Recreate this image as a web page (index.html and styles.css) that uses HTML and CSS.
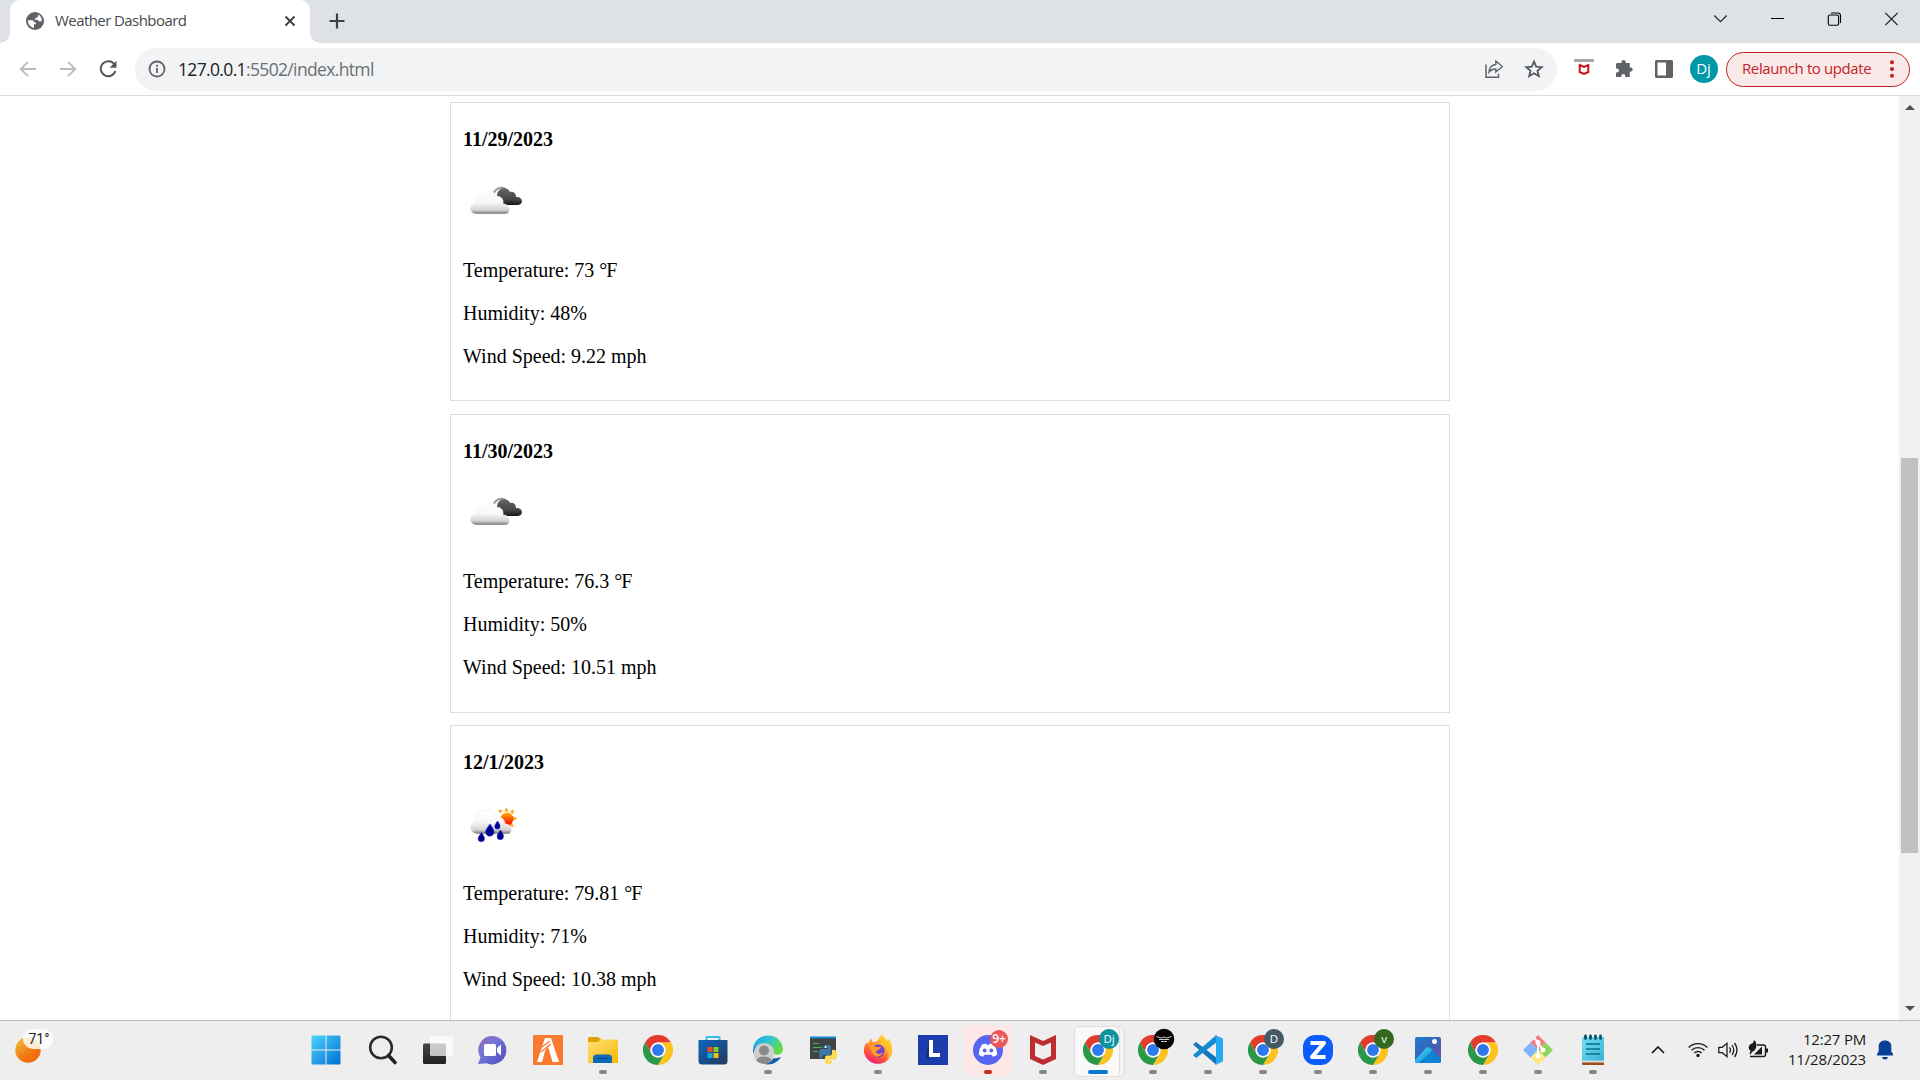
FILE: index.html
```html
<!DOCTYPE html>
<html lang="en">
<head>
<meta charset="utf-8">
<title>Weather Dashboard</title>
<link rel="stylesheet" href="styles.css">
</head>
<body>
<svg class="sprites" width="0" height="0">
  <defs>
    <linearGradient id="gCloud" x1="0" y1="0" x2="0" y2="1"><stop offset="0" stop-color="#fff"/><stop offset=".5" stop-color="#f8f8f8"/><stop offset=".83" stop-color="#d2d2d2"/><stop offset="1" stop-color="#707070"/></linearGradient>
    <linearGradient id="gDark" x1="0" y1="0" x2="0" y2="1"><stop offset="0" stop-color="#666"/><stop offset=".65" stop-color="#474747"/><stop offset="1" stop-color="#151515"/></linearGradient>
    <linearGradient id="gSun" x1="0" y1="0" x2="0" y2="1"><stop offset="0" stop-color="#ffb300"/><stop offset=".5" stop-color="#f50"/><stop offset="1" stop-color="#f00"/></linearGradient>
    <linearGradient id="gWin" x1="0" y1="0" x2="1" y2="1"><stop offset="0" stop-color="#4ed2ff"/><stop offset="1" stop-color="#006fd1"/></linearGradient>
    <linearGradient id="gOrange" x1="0" y1="0" x2=".7" y2="1"><stop offset="0" stop-color="#f0c23a"/><stop offset=".75" stop-color="#f1720f"/><stop offset="1" stop-color="#ef6a10"/></linearGradient>
    <linearGradient id="gChat" x1="0" y1="0" x2="1" y2="1"><stop offset="0" stop-color="#9a63a8"/><stop offset=".4" stop-color="#7079d8"/><stop offset="1" stop-color="#5045bd"/></linearGradient>
    <linearGradient id="gFolder" x1="0" y1="0" x2="1" y2="1"><stop offset="0" stop-color="#ffe07a"/><stop offset="1" stop-color="#f7b900"/></linearGradient>
    <linearGradient id="gStore" x1="0" y1="0" x2="1" y2="1"><stop offset="0" stop-color="#0b68bd"/><stop offset="1" stop-color="#24365c"/></linearGradient>
    <linearGradient id="gEdge" x1="0" y1="0" x2="1" y2=".5"><stop offset="0" stop-color="#1a9fe0"/><stop offset=".5" stop-color="#2fc3d8"/><stop offset="1" stop-color="#64dc48"/></linearGradient>
    <linearGradient id="gFox" x1=".8" y1="0" x2=".3" y2="1"><stop offset="0" stop-color="#ffe63d"/><stop offset=".45" stop-color="#ff9428"/><stop offset=".8" stop-color="#ff4048"/><stop offset="1" stop-color="#e8208a"/></linearGradient>
    <linearGradient id="gPhoto" x1="0" y1="0" x2="1" y2="1"><stop offset="0" stop-color="#1c7fd4"/><stop offset=".5" stop-color="#3763b5"/><stop offset="1" stop-color="#8848ad"/></linearGradient>
    <linearGradient id="gHill" x1="0" y1="0" x2="1" y2="1"><stop offset="0" stop-color="#4fe0fb"/><stop offset="1" stop-color="#0a7fd0"/></linearGradient>
    <linearGradient id="gNote" x1="0" y1="0" x2="1" y2="1"><stop offset="0" stop-color="#76dff0"/><stop offset="1" stop-color="#35b4d8"/></linearGradient>
    <linearGradient id="gView" x1="0" y1="0" x2="0" y2="1"><stop offset="0" stop-color="#454545"/><stop offset="1" stop-color="#222"/></linearGradient>
    <symbol id="chrome" viewBox="0 0 48 48">
      <path fill="#e33b2e" d="M24 12H44.8A24 24 0 0 0 3.2 12L13.6 30A12 12 0 0 1 24 12z"/>
      <path fill="#fcc31e" d="M24 12H44.8A24 24 0 0 1 24 48L34.4 30A12 12 0 0 0 24 12z"/>
      <path fill="#2a9847" d="M34.4 30A12 12 0 0 1 13.6 30L3.2 12A24 24 0 0 0 24 48z"/>
      <circle cx="24" cy="24" r="12" fill="#fff"/><circle cx="24" cy="24" r="9.5" fill="#3079ed"/>
    </symbol>
    <symbol id="clouds" viewBox="0 0 62 62">
      <path fill="none" stroke="#999" stroke-width="2" d="M30 27c1-8 10-11 14-5"/>
      <path fill="url(#gDark)" d="M34 27c0-9 11-10 13-4 4-1 6 2 6 5 7-1 8 8 2 8H43c-6-1-9-4-9-9z"/>
      <path fill="url(#gCloud)" stroke="#ededed" stroke-width=".5" d="M13.500 45c-7.500 0-8.500-10-1-11-1-6 2-8 6-7 2-6 12.500-7 14.500 0 5 0 8 3 7 8 7-1 9 10 2 10z"/>
    </symbol>
    <symbol id="rain" viewBox="0 -1 62 62">
      <path fill="#ffa212" d="m43.500 14 2 4.500h-4zM51 16.500l-1 5-3-3zM54.500 25.500l-4.500 2v-4zM51 34l-5-1 3-3zM35 16.500l5 1-3 3z"/>
      <circle cx="44" cy="26" r="6.500" fill="url(#gSun)"/>
      <path fill="url(#gCloud)" stroke="#e8e8e8" stroke-width=".5" d="M15 41c-9 0-9-11-3-13 0-12 19-16 22-3 6-2 8 3 8 6 7-1 9 10 2 10z"/>
      <path fill="#000090" stroke="#2222bc" stroke-width=".5" d="M27 31c3 4 4 6 4 8a4.200 4.200 0 0 1-8.400 0c0-2 1.500-4 4.400-8zM18.500 39.500c2 3 3 4.500 3 6a3.200 3.200 0 0 1-6.400 0c0-1.500 1.400-3 3.400-6zM37.500 37c2 3 3 4.500 3 6.500a3.200 3.200 0 0 1-6.400 0c0-2 1.400-3.500 3.400-6.500zM34.500 28c2 2.500 2.500 4 2.500 5.500a2.600 2.600 0 0 1-5.200 0c0-1.500 1-3 2.700-5.500z"/>
    </symbol>
  </defs>
</svg>

<header class="tabstrip">
  <div class="tab">
    <svg class="favicon" width="18" height="18" viewBox="0 0 18 18"><circle cx="9" cy="9" r="9" fill="#5f6368"/><path fill="#fff" d="M2 8.200h4.200c1.200 0 1.600.8 1.600 1.800 1.600 0 2.300.8 2.300 2.300H8v3.600A7 7 0 0 1 2 8.200zM9.500 2.100l2.900.8c0 2-.8 2.700-2.600 2.700-.2 1.500-.9 2.200-2.300 2.200h3.600c1.200 0 1.500 1.800 2.900 1.800.6 0 1.300-.3 2-1l-.6-2.900-2.100-2.600z"/></svg>
    <span class="tab-title">Weather Dashboard</span>
    <svg width="12" height="12" viewBox="0 0 12 12"><path d="M1.500 1.500l9 9M10.500 1.500l-9 9" stroke="#3c4043" stroke-width="1.900"/></svg>
  </div>
  <svg class="newtab" width="16" height="16" viewBox="0 0 16 16"><path d="M8 0.500v15M.5 8h15" stroke="#3c4043" stroke-width="2.200"/></svg>
  <div class="wincontrols">
    <svg viewBox="0 0 14 14"><path d="M.8 3.500l6.200 6.200L13.200 3.500" fill="none" stroke="#222" stroke-width="1.100"/></svg>
    <svg viewBox="0 0 14 14"><path d="M.5 6.500h13" stroke="#000" stroke-width="1"/></svg>
    <svg viewBox="0 0 14 14"><rect x=".8" y="3" width="10.300" height="10.300" rx="1.500" fill="none" stroke="#000" stroke-width="1.100"/><path d="M3.500 1h7q2.500 0 2.500 2.500v7.500" fill="none" stroke="#000" stroke-width="1.100"/></svg>
    <svg viewBox="0 0 14 14"><path d="M.8.8l12.400 12.400M13.200.8L.8 13.200" stroke="#111" stroke-width="1.100"/></svg>
  </div>
</header>

<nav class="toolbar">
  <div class="tool"><svg width="18" height="18" viewBox="0 0 18 18"><path d="M17 9H2M9 1.800L1.800 9 9 16.200" fill="none" stroke="#b9bbbd" stroke-width="1.800"/></svg></div>
  <div class="tool"><svg width="18" height="18" viewBox="0 0 18 18"><path d="M1 9h15M9 1.800L16.200 9 9 16.200" fill="none" stroke="#b9bbbd" stroke-width="1.800"/></svg></div>
  <div class="tool"><svg width="18" height="18" viewBox="0 0 18 18"><path d="M15.500 4.500A7.500 7.500 0 1 0 16.400 11" fill="none" stroke="#54585c" stroke-width="2"/><path d="M17.500 .8v7h-7z" fill="#54585c"/></svg></div>
  <div class="omnibox">
    <svg width="18" height="18" viewBox="0 0 18 18"><circle cx="9" cy="9" r="7.500" fill="none" stroke="#5f6368" stroke-width="1.800"/><path d="M9 8v5M9 4.800v1.900" stroke="#5f6368" stroke-width="1.800"/></svg>
    <span class="url"><b>127.0.0.1</b>:5502/index.html</span>
    <svg class="share" width="20" height="18" viewBox="0 0 20 18"><path d="M2 4.500v12.700h12.500v-3.500" fill="none" stroke="#5f6368" stroke-width="1.500"/><path d="M11.800 1l6.500 5.500-6.500 5.500V9c-3 0-5 .8-6.800 3.200.3-4 2.500-7.200 6.800-7.700z" fill="none" stroke="#5f6368" stroke-width="1.400"/></svg>
    <svg width="20" height="20" viewBox="0 0 20 20"><path d="M10 2.600l2.200 5.100 5.500.5-4.200 3.600 1.300 5.400-4.800-2.900-4.800 2.900 1.300-5.400-4.200-3.600 5.500-.5z" fill="none" stroke="#54585c" stroke-width="1.800"/></svg>
  </div>
  <div class="tool mcafee"><svg width="20" height="20" viewBox="0 0 20 20"><rect y="0" width="20" height="3" rx="1" fill="#aaa5a5"/><path d="M5.700 6l4.300 2 4.300-2v7L10 15l-4.300-2z" fill="none" stroke="#c01818" stroke-width="2"/></svg></div>
  <div class="tool"><svg width="20" height="20" viewBox="0 0 20 20"><path fill="#5f6368" d="M3 4h4.500v-.8a2.100 2.100 0 0 1 4.200 0V4h4.100v4.500h.8a2.100 2.100 0 0 1 0 4.200h-.8V18h-4.500v-1a2 2 0 0 0-4 0v1H2v-4.500h1a2 2 0 0 0 0-4H2V5z"/></svg></div>
  <div class="tool"><svg width="18" height="18" viewBox="0 0 18 18"><path fill="#5f6368" fill-rule="evenodd" d="M1 0h16l1 1v16l-1 1H1l-1-1V1zM2.500 2.500v13h8.500v-13z"/></svg></div>
  <div class="tool"><span class="avatar">Dj</span></div>
  <div class="relaunch"><span>Relaunch to update</span><svg width="4" height="18" viewBox="0 0 4 18"><g fill="#c5221f"><circle cx="2" cy="2.200" r="2"/><circle cx="2" cy="9" r="2"/><circle cx="2" cy="15.800" r="2"/></g></svg></div>
</nav>

<div class="viewport">
  <main class="forecast">
    <section class="card">
      <h4>11/29/2023</h4>
      <svg class="wx"><use href="#clouds"/></svg>
      <p>Temperature: 73 <span class="deg">°</span>F</p>
      <p>Humidity: 48%</p>
      <p>Wind Speed: 9.22 mph</p>
    </section>
    <section class="card">
      <h4>11/30/2023</h4>
      <svg class="wx"><use href="#clouds"/></svg>
      <p>Temperature: 76.3 <span class="deg">°</span>F</p>
      <p>Humidity: 50%</p>
      <p>Wind Speed: 10.51 mph</p>
    </section>
    <section class="card">
      <h4>12/1/2023</h4>
      <svg class="wx"><use href="#rain"/></svg>
      <p>Temperature: 79.81 <span class="deg">°</span>F</p>
      <p>Humidity: 71%</p>
      <p>Wind Speed: 10.38 mph</p>
    </section>
  </main>
  <div class="scrollbar">
    <svg width="10" height="5" viewBox="0 0 10 5"><path fill="#505050" d="M0 5l5-5 5 5z"/></svg>
    <div class="thumb"></div>
    <svg class="down" width="10" height="5" viewBox="0 0 10 5"><path fill="#505050" d="M0 0l5 5 5-5z"/></svg>
  </div>
</div>

<footer class="taskbar">
  <div class="weather">
    <svg width="60" height="59" viewBox="0 0 60 59"><circle cx="28" cy="29" r="12.700" fill="url(#gOrange)"/><rect x="23" y="8" width="30" height="20" rx="10" fill="#fff" fill-opacity=".83"/><text x="28.500" y="23.200">71°</text></svg>
  </div>
  <div class="apps">
    <div class="app start"><svg viewBox="0 0 30 30"><path fill="url(#gWin)" d="M2 .5h12.500v14H.5V2q0-1.500 1.500-1.500zM15.500.5H28q1.500 0 1.500 1.500v12.500h-14zM.5 15.500h14v14H2q-1.500 0-1.500-1.500zM15.500 15.500h14V28q0 1.500-1.500 1.500H15.500z"/></svg></div>
    <div class="app"><svg viewBox="0 0 30 30"><circle cx="13" cy="12.500" r="10.800" fill="none" stroke="#2b2b2b" stroke-width="2.600"/><path d="M20.500 20.500l6.500 7" stroke="#222" stroke-width="3.600" stroke-linecap="round"/></svg></div>
    <div class="app"><svg viewBox="0 0 30 30"><rect y="8.500" width="23" height="20.500" rx="1.500" fill="url(#gView)"/><rect x="7" y="1" width="23" height="20" rx="1.500" fill="#fff" fill-opacity=".72"/></svg></div>
    <div class="app"><svg viewBox="0 0 30 30"><path fill="url(#gChat)" d="M14.500 1a14.200 14.200 0 1 1-6 27.200L0 29l2.500-6.500A14 14 0 0 1 14.500 1z"/><rect x="6" y="9" width="12" height="12" rx="1.500" fill="#fff"/><path fill="#fff" d="M19 13l4-3.500v11L19 17z"/></svg></div>
    <div class="app"><svg viewBox="0 0 30 30"><rect width="30" height="30" fill="#fb7a32"/><path fill="#fff" d="M12 3h6l8 24h-6.500L15 11.500 12 16l-3 11H4z"/><path d="M8 17l10-8M9 12l8-6" stroke="#fb7a32" stroke-width="1.300"/></svg></div>
    <div class="app"><svg viewBox="0 0 30 30"><path fill="#e0a000" d="M0 8V3.500Q0 2 1.500 2H10l3 2.500V8z"/><path fill="url(#gFolder)" d="M0 7h9l4-2.500h17V28H0z"/><path fill="#0d6bbd" d="M5 28v-5q0-3.500 3.500-3.500h12q3.500 0 3.500 3.500v5z"/><path d="M9 23.500h11" stroke="#084a86" stroke-width="1.200"/></svg><i></i></div>
    <div class="app"><svg><use href="#chrome"/></svg></div>
    <div class="app"><svg viewBox="0 0 30 30"><path d="M8.500 5V2.800Q8.500 2 9.500 2h11q1 0 1 .8V5" fill="none" stroke="#34bdea" stroke-width="2"/><path fill="url(#gStore)" d="M.5 5h29v21q0 3.500-3.500 3.500H4Q.5 29.500.5 26z"/><path fill="#f1511b" d="M9.500 12h5v5h-5z"/><path fill="#80cc28" d="M15.500 12h5v5h-5z"/><path fill="#00adef" d="M9.500 18h5v5h-5z"/><path fill="#fbbc09" d="M15.500 18h5v5h-5z"/></svg></div>
    <div class="app"><svg viewBox="0 0 30 30"><path fill="#0d5eaf" d="M0 15C2 7 12 5 18 11l-5 8c3 5 8 5 15 3-5 8-15 10-22 4Q0 22 0 15z"/><path fill="url(#gEdge)" d="M0 14C1-3 28-5 30 14c0 5-5 7-10 5 1-10-12-14-20-5z"/><circle cx="11" cy="18.500" r="10.500" fill="#cfcfcf"/><circle cx="11" cy="15.500" r="5" fill="#8c8a88"/><path fill="#8c8a88" d="M3.500 26q0-4.500 7.500-4.500t7.500 4.500Q11 32 3.500 26z"/></svg><i></i></div>
    <div class="app"><svg viewBox="0 0 30 30"><path fill="#404244" d="M2 2h26v22H2z"/><path fill="#1588d0" d="M2 1.500h26v2H2z"/><path d="M5 8.500h6M5 12.500h9M5 16.500h5" stroke="#3fb54a"/><path fill="#3977ac" d="M16 10.500q4-1.500 7 .5v7q0 2-2 2h-5q-2 0-2 4-3 0-3-5t3-5h6v-1h-5z"/><path fill="#ffd94e" d="M24 15q5-1 5 4.500t-4 5h-5v1h4v2q-3 3-7 0v-5q0-2 2-2h3q2 0 2-3z"/><circle cx="17.500" cy="12" r="1" fill="#fff"/></svg></div>
    <div class="app"><svg viewBox="0 0 30 30"><path fill="url(#gFox)" d="M18 0c3 1 4 3 5 5l2 1-.5-3c4 4 5 9 4.500 14a14.200 14.200 0 0 1-28 0c-.5-5 1-8 3-10l1 2 3-6 1.500 4 3 0 2-2C16 3 17 2 18 0z"/><circle cx="15" cy="16" r="6.500" fill="#7043d1"/><path fill="#ff9a2b" d="M5 10c4-1 6 0 8 2h5c-1 3-4 3-5 5 1 3 5 2 7 0-2 6-9 6-11 1-1-3-2-6-4-8z"/><path fill="#ffc82f" d="M18 0c3 1 4 3 5 5l2 1-.5-3c4 4 5 9 4.500 14-1 4-3 6-5 8 3-8-1-14-7-17z" fill-opacity=".75"/></svg><i></i></div>
    <div class="app"><svg viewBox="0 0 30 30"><path fill="#1e3dad" d="M0 0h30v30H0z"/><path fill="#123073" d="M11 5L8 23l3 1z"/><path fill="#fff" d="M11 5h4v13h7v4H11z"/></svg></div>
    <div class="app alert"><svg viewBox="0 0 30 30"><circle cx="15" cy="15" r="15" fill="#5865f2"/><path fill="#fff" d="M9 9.500l4-1 .7 1.200h2.600l.7-1.200 4 1q3 4 3.300 10-2 1.800-4.500 2.300l-1.300-2h-7l-1.300 2q-2.500-.5-4.500-2.300Q6 13.500 9 9.500z"/><circle cx="11.700" cy="15.500" r="1.900" fill="#5865f2"/><circle cx="18.300" cy="15.500" r="1.900" fill="#5865f2"/><circle cx="26" cy="4" r="9" fill="#eb5757"/><text x="26" y="8" class="nine">9+</text></svg><i></i></div>
    <div class="app"><svg viewBox="0 0 30 30"><path fill="#bd2c2f" fill-rule="evenodd" d="M2 0l13 6L28 0v24l-13 6-13-6zM7 7.500V21l8 3.500 8-3.500V7.500L15 11z"/></svg><i></i></div>
    <div class="app active"><svg viewBox="0 0 30 30"><use href="#chrome"/><circle cx="26" cy="4" r="10" fill="#0b929f"/><text x="26" y="8" class="badge">Dj</text></svg><i></i></div>
    <div class="app"><svg viewBox="0 0 30 30"><use href="#chrome"/><circle cx="26" cy="4" r="10.300" fill="#050505"/><path d="M18.500 1.500l5 1.500 2.500-1 2.500 1 5-1.500M21 4.500h10M23 6.500h6" stroke="#ccc" stroke-width="1" fill="none"/></svg><i></i></div>
    <div class="app"><svg viewBox="0 0 30 30"><path fill="#1475bd" d="M0 9.500L3 7l21 16v6.500l-2-.7z"/><path fill="#168bd4" d="M0 20l3 3L24 7V.5l-2 .7z"/><path fill="#2aa9f3" d="M22 0l8 3.500v23L22 30l1-3V3z"/></svg><i></i></div>
    <div class="app"><svg viewBox="0 0 30 30"><use href="#chrome"/><circle cx="26" cy="4" r="10" fill="#455a64"/><text x="26" y="8" class="badge">D</text></svg><i></i></div>
    <div class="app"><svg viewBox="0 0 30 30"><rect width="30" height="30" rx="12" fill="#0b5cff"/><path d="M7.500 8h13.500L9 22h13.500" fill="none" stroke="#fff" stroke-width="4.200" stroke-linejoin="round"/></svg><i></i></div>
    <div class="app"><svg viewBox="0 0 30 30"><use href="#chrome"/><circle cx="26" cy="4" r="10" fill="#33691e"/><text x="26" y="8" class="badge">v</text></svg><i></i></div>
    <div class="app"><svg viewBox="0 0 30 30"><rect x="2" y="2" width="26" height="26" rx="2" fill="url(#gPhoto)"/><path fill="#0b82d3" d="M4 28l11-15q1-1 2 0l11 11v2q0 2-2 2z"/><path fill="url(#gHill)" d="M2 25l11-12q2-2 4 0l3 2L6 28H4q-2 0-2-3z"/><circle cx="21.500" cy="6.500" r="2.500" fill="#fff"/></svg><i></i></div>
    <div class="app"><svg><use href="#chrome"/></svg><i></i></div>
    <div class="app"><svg viewBox="0 0 30 30"><path fill="#f47c7c" d="M15 0l7.500 7.500L15 15 7.500 7.500z"/><path fill="#8dd35f" d="M22.500 7.500L30 15l-7.500 7.500L15 15z"/><path fill="#80b3ff" d="M7.500 7.500L15 15l-7.500 7.500L0 15z"/><path fill="#ffe680" d="M15 15l7.500 7.500L15 30l-7.500-7.500z"/><path d="M11 3l4 4v14M15 8l5 7" stroke="#fff" stroke-width="2" fill="none"/><circle cx="15" cy="7.500" r="2.500" fill="#fff"/><circle cx="20" cy="15" r="2.500" fill="#fff"/><circle cx="15" cy="21" r="2.500" fill="#fff"/></svg><i></i></div>
    <div class="app"><svg viewBox="0 0 30 30"><path fill="url(#gNote)" d="M4 2h22v24H4z"/><path fill="#ddd" d="M4 25.500h22V28H4z"/><path fill="#9b5017" d="M4 27.500h22V30H5q-1 0-1-1z"/><path d="M7.500 1v2.500M12.500 1v2.500M17.500 1v2.500M22.500 1v2.500" stroke="#0b5366" stroke-width="2.800" stroke-linecap="round"/><path d="M8 9h14M8 14h14M8 19h14" stroke="#0b6e8c" stroke-width="1.700"/></svg><i></i></div>
  </div>
  <div class="tray">
    <svg class="chev" viewBox="0 0 14 8"><path d="M1 7l6-6 6 6" fill="none" stroke="#1b1b1b" stroke-width="1.700"/></svg>
    <svg viewBox="0 0 20 20"><g fill="none" stroke="#1b1b1b" stroke-width="1.400"><path d="M.7 7.500a13.200 13.200 0 0 1 18.600 0M3.500 10.300a9.200 9.200 0 0 1 13 0M6.300 13a5.200 5.200 0 0 1 7.400 0"/></g><circle cx="10" cy="15.500" r="1.700" fill="#1b1b1b"/></svg>
    <svg viewBox="0 0 20 20"><g fill="none" stroke="#1b1b1b" stroke-width="1.300"><path d="M.8 7.300h3.400L9 3.300v13.400l-4.800-4H.8zM11.500 7.300q2 2.700 0 5.400M14 5q3.500 5 0 10M16.500 3q5 7 0 14"/></g></svg>
    <svg viewBox="0 0 20 20"><path d="M9 5h6.500q2 0 2 2v7.500q0 2-2 2H2" fill="none" stroke="#1b1b1b" stroke-width="1.400"/><path fill="#1b1b1b" d="M18 8.500h2v4h-2zM6 0c4 3 3 10-2 12l-1.500 2.500-1-.8L2.500 11C-1 8 1 4 5 3zM6 14.500l8-8v8z"/></svg>
    <div class="clock"><span class="time">12:27 PM</span><span class="date">11/28/2023</span></div>
    <svg class="bell" viewBox="0 0 16 20"><path fill="#073f94" d="M8 .5c4 0 6.300 2.500 6.300 6v5L16 14v1.500H0V14l1.700-2.500v-5C1.700 3 4 .5 8 .5zM5 17h6q-.5 2.500-3 2.500T5 17z"/></svg>
  </div>
</footer>
</body>
</html>
```
FILE: styles.css
```css
* { box-sizing: border-box; }
body {
  margin: 0;
  width: 1920px;
  height: 1080px;
  overflow: hidden;
  display: flex;
  flex-direction: column;
  background: #fff;
  font-family: "Open Sans", "Noto Sans", sans-serif;
}
svg { display: block; flex: none; }
.sprites { height: 0; }

/* Tab strip */
.tabstrip { display: flex; flex: none; height: 43px; background: #dee1e6; }
.tab {
  display: flex;
  align-items: center;
  width: 300px;
  margin-left: 10px;
  padding: 0 14px 1px 16px;
  background: #fff;
  border-radius: 10px 10px 0 0;
  position: relative;
}
.tab::before, .tab::after {
  content: "";
  position: absolute;
  bottom: 0;
  width: 10px;
  height: 10px;
}
.tab::before { left: -10px; background: radial-gradient(circle at 0 0, #dee1e6 9.5px, #fff 10px); }
.tab::after { right: -10px; background: radial-gradient(circle at 100% 0, #dee1e6 9.5px, #fff 10px); }
.tab-title { flex: 1; margin: -2px 0 0 11px; font-size: 15px; letter-spacing: -0.57px; color: #45494d; }
.newtab { margin: 13px 0 0 19px; }
.wincontrols { display: flex; margin-left: auto; padding-right: 0.5px; height: 37px; }
.wincontrols svg { width: 57px; height: 14px; margin-top: 12px; }

/* Toolbar */
.toolbar {
  display: flex;
  align-items: center;
  flex: none;
  height: 53px;
  padding: 0 10px 0 7.5px;
  border-bottom: 1px solid #dadce0;
}
.tool { display: flex; justify-content: center; width: 40px; }
.omnibox {
  display: flex;
  align-items: center;
  width: 1422px;
  height: 43px;
  margin: 0 6.5px 0 7.5px;
  padding: 0 13px;
  border-radius: 22px;
  background: #f1f3f4;
}
.url { flex: 1; margin-left: 12px; font-size: 17.5px; letter-spacing: -0.65px; color: #6b6f73; }
.url b { font-weight: 400; color: #202124; }
.share { margin-right: 20px; }
.mcafee svg { margin-top: -1px; }
.avatar {
  width: 28px;
  height: 28px;
  border-radius: 50%;
  background: #0097a7;
  color: #fff;
  font-size: 15px;
  line-height: 27px;
  text-align: center;
}
.relaunch {
  display: flex;
  align-items: center;
  justify-content: space-between;
  width: 184px;
  height: 35px;
  margin-left: 2.5px;
  padding: 0 15px 1px;
  border: 1px solid #c5221f;
  border-radius: 18px;
  background: #f9eae9;
  color: #c5221f;
  font-size: 15px;
  letter-spacing: -0.4px;
  white-space: nowrap;
}
.relaunch span { margin-top: -1px; }

/* Page */
.viewport { display: flex; flex: none; height: 924px; overflow: hidden; }
.forecast {
  display: flex;
  flex-direction: column;
  gap: 12.5px;
  width: 1000px;
  margin-left: 450px;
  padding-top: 6px;
  font-family: "Liberation Serif", serif;
  font-size: 20px;
  line-height: 23px;
  color: #000;
}
.card { flex: none; height: 299px; padding: 25px 12px; border: 1px solid #ddd; }
.card h4, .card p { margin: 0; font-size: 20px; }
.card p + p { margin-top: 20px; }
.deg { letter-spacing: -1px; }
.wx { width: 62px; height: 62px; margin: 17.5px 0 28px; }

.scrollbar {
  display: flex;
  flex-direction: column;
  align-items: center;
  width: 21px;
  margin-left: auto;
  padding: 9px 0;
  background: #f1f1f1;
}
.thumb { width: 17px; height: 395px; margin-top: 348px; background: #c1c1c1; }
.down { margin-top: auto; }

/* Taskbar */
.taskbar { display: flex; flex: none; height: 60px; border-top: 1px solid #bababa; background: #eee; }
.weather { width: 296.5px; }
.weather text { font: 14px Roboto, sans-serif; fill: #222; }
.apps { display: flex; }
.app {
  display: flex;
  align-items: center;
  justify-content: center;
  width: 55px;
  height: 58px;
  position: relative;
}
.app.start { width: 59px; }
.app svg { width: 30px; height: 30px; overflow: visible; position: relative; z-index: 1; }
.app i {
  position: absolute;
  left: 23.5px;
  top: 49px;
  width: 8px;
  height: 4px;
  border-radius: 2px;
  background: #868686;
  z-index: 1;
}
.app.alert::before, .app.active::before, .app.active::after {
  content: "";
  position: absolute;
  top: 4px;
  left: 3px;
  width: 49px;
  height: 50px;
  border-radius: 5px;
  background: #fde7e7;
}
.app.active::before { top: 5px; left: 8px; width: 44px; height: 49px; background: #f3f3f3; border: 1px solid #dedede; }
.app.active::after { top: 5px; width: 44px; height: 49px; background: #f9f9f9; border: 1px solid #dedede; }
.app.alert i { background: #c42b1c; }
.app.active i { left: 17.5px; width: 20px; background: #0078d4; }
.badge { font: 11.5px "Open Sans", sans-serif; fill: #fff; text-anchor: middle; }
.nine { font: 600 12px "Open Sans", sans-serif; fill: #fff; text-anchor: middle; }

.tray { display: flex; align-items: center; height: 58px; margin-left: auto; padding-right: 27px; }
.tray > svg { width: 20px; height: 20px; margin: 0 5px; }
.tray > .chev { width: 14px; height: 8px; margin: 0 23px 0 15px; }
.tray > .chev + svg { margin-left: 0; }
.clock {
  display: flex;
  flex-direction: column;
  align-items: flex-end;
  width: 93px;
  margin-bottom: 3px;
  font-size: 15px;
  line-height: 20px;
  letter-spacing: -0.15px;
  color: #1b1b1b;
}
.time { letter-spacing: -0.2px; }
.tray > .bell { width: 16px; margin: 0 0 0 11px; }
```
